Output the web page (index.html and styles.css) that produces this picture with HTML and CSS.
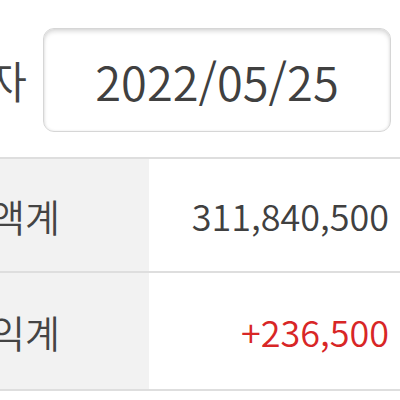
FILE: index.html
```html
<!DOCTYPE html>
<html lang="ko">
<head>
<meta charset="utf-8">
<link rel="stylesheet" href="styles.css">
</head>
<body>
<div class="date-row">
  <div class="date-label"><span>일자</span></div>
  <div class="date-box">2022/05/25</div>
</div>
<div class="table">
  <div class="row">
    <div class="label"><span>평가금액계</span></div>
    <div class="value">311,840,500</div>
  </div>
  <div class="row">
    <div class="label"><span>평가손익계</span></div>
    <div class="value plus">+236,500</div>
  </div>
</div>
</body>
</html>
```
FILE: styles.css
```css
html, body {
  margin: 0;
  padding: 0;
  background: #ffffff;
}
body {
  font-family: "Noto Sans CJK KR", "Noto Sans", sans-serif;
  font-weight: 350;
  color: #444444;
  width: 400px;
  overflow: hidden;
}
.date-row {
  display: flex;
  align-items: center;
  height: 157px;
  box-sizing: border-box;
  padding: 28px 9px 25px 0;
}
.date-label {
  flex: 0 0 43px;
  min-width: 0;
  display: flex;
  justify-content: flex-end;
  padding-right: 16px;
  box-sizing: border-box;
  font-size: 44px;
  white-space: nowrap;
}
.date-label span,
.label span {
  flex: none;
}
.date-box {
  flex: 1;
  min-width: 0;
  height: 104px;
  box-sizing: border-box;
  border: 1px solid #d6d6d6;
  border-radius: 11px;
  box-shadow: inset 0 3px 4px rgba(0, 0, 0, 0.12), inset 0 0 3px rgba(0, 0, 0, 0.08);
  display: flex;
  align-items: center;
  justify-content: center;
  font-size: 47px;
  color: #404040;
}
.table {
  border-top: 2px solid #dedede;
}
.row {
  display: flex;
  height: 112px;
  border-bottom: 2px solid #dedede;
}
.row + .row {
  height: 116px;
}
.label {
  flex: 0 0 149px;
  min-width: 0;
  background: #f2f2f2;
  display: flex;
  align-items: center;
  justify-content: flex-end;
  padding-right: 89px;
  box-sizing: border-box;
  font-size: 38px;
  white-space: nowrap;
}
.value {
  flex: 1;
  min-width: 0;
  display: flex;
  align-items: center;
  justify-content: flex-end;
  padding-right: 11px;
  font-size: 36px;
  color: #404040;
}
.value.plus {
  color: #d82626;
}
```
